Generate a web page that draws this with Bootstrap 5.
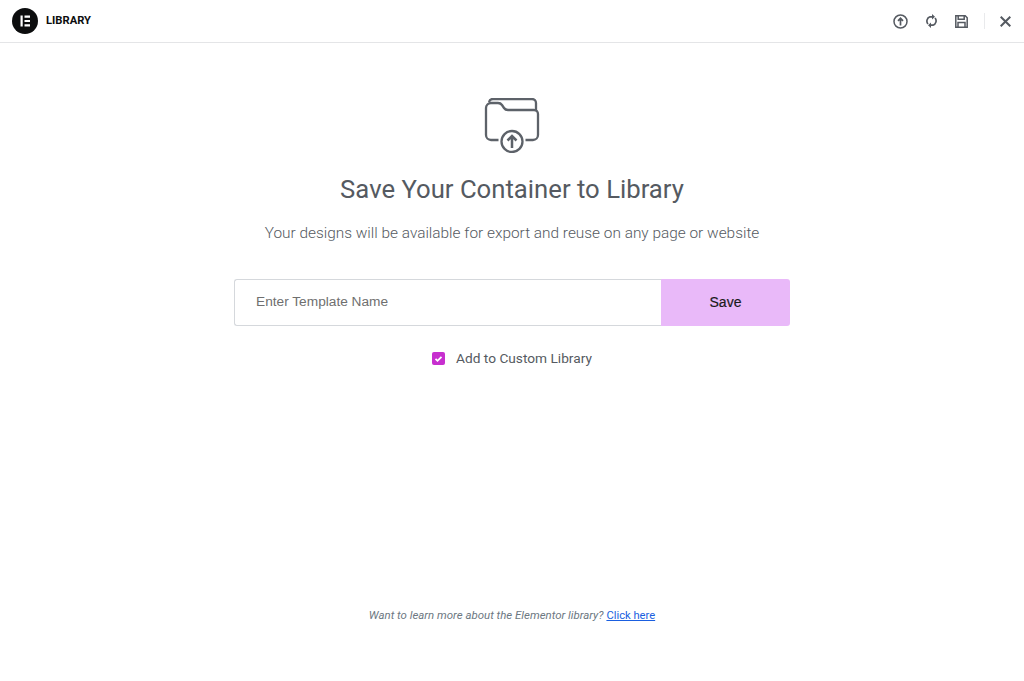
<!DOCTYPE html>
<html lang="en"><head><meta charset="utf-8"><title>Library</title>
<link href="https://cdn.jsdelivr.net/npm/bootstrap@5.3.0/dist/css/bootstrap.min.css" rel="stylesheet">
<style>
html,body{height:681px;overflow:hidden;background:#fff}
body{font-family:Roboto,sans-serif;color:#555a61}
.lib-head{height:43px;border-bottom:1px solid #e4e5e7;padding:0 13px 0 12px}
.lib-logo{width:26px;height:26px;flex:none}
.lib-title{font-size:11.2px;font-weight:700;color:#0c0d0e;margin-left:8px;position:relative;top:.5px}
.lib-tool-a{margin-right:18px}
.lib-sep{width:1px;height:16px;background:#e9eaec;margin:0 15px 0 16px}
.lib-main{padding-top:55px}
.lib-h{font-size:25.7px;font-weight:400;color:#555a61;margin:21px 0 0;line-height:30px}
.lib-sub{font-size:15.4px;font-weight:300;color:#555a61;margin:17px 0 0;line-height:24px}
.lib-form{width:556px;height:47px;margin-top:34px}
.lib-input{flex:1;border:1px solid #d5d8dc;border-right:0;border-radius:3px 0 0 3px;padding:0 21px;font-size:13.7px;font-family:"Liberation Sans",sans-serif;color:#555}
.lib-input::placeholder{color:#6f6f6f;opacity:1}
.lib-save{width:129px;background:#e9b9f9;border:0;border-radius:0 3px 3px 0;font-size:14px;font-weight:400;color:#1b1b1b;font-family:"Liberation Sans",sans-serif;-webkit-text-stroke:.2px #1b1b1b}
.lib-check{margin-top:23px;font-size:13.7px;color:#555a61;line-height:18px;gap:11px}
.lib-box{width:13px;height:13px;background:#c72fcf;border-radius:2px}
.lib-foot{position:absolute;top:607px;left:0;right:0;font-size:11.45px;font-style:italic;color:#6d7882;line-height:16px}
.lib-foot a{font-style:normal;font-size:11.2px;color:#1a5fe0}
</style></head><body>
<header class="lib-head d-flex align-items-center justify-content-between">
<div class="d-flex align-items-center">
<svg class="lib-logo" viewBox="0 0 26 26"><circle cx="13" cy="13" r="13" fill="#0c0d0e"/><path fill="#fff" d="M8.500 7.500h2.200v11H8.500zM12.500 7.500h5.500v2.200h-5.500zM12.500 11.900h5.500v2.200h-5.500zM12.500 16.300h5.500v2.200h-5.500z"/></svg>
<span class="lib-title">LIBRARY</span></div>
<div class="d-flex align-items-center">
<svg width="15" height="15" viewBox="0 0 15 15" fill="none" stroke="#555a61" stroke-width="1.500" class="lib-tool-a"><circle cx="7.500" cy="7.500" r="6.500"/><path d="M7.500 11.500V4.500M5 6.800 7.500 4.300 10 6.800" stroke-width="1.700"/></svg>
<svg width="11" height="14" viewBox="0 0 11 14" fill="none" stroke="#555a61" stroke-width="1.700" class="lib-tool-a"><path d="M2 10A4.500 4.500 0 0 1 4 2.800H6.500M9 4A4.500 4.500 0 0 1 7 11.200H4.500"/><path fill="#555a61" stroke="none" d="M6 0v5.500l3-2.700zM5 8.500V14L2 11.200z"/></svg>
<svg width="13" height="13" viewBox="0 0 13 13" fill="none" stroke="#555a61" stroke-width="1.500"><path d="M.8.800h9.400l2 2v9.400H.8z"/><path d="M3.200.800v3.400h6V.800M3 12.200V7.500h7v4.700"/></svg>
<span class="lib-sep"></span>
<svg width="11" height="11" viewBox="0 0 11 11" fill="none" stroke="#555a61" stroke-width="2"><path d="m.7.700 9.600 9.600M10.300.700.7 10.300"/></svg>
</div></header>
<main class="lib-main d-flex flex-column align-items-center">
<svg width="56" height="55" viewBox="0 0 56 55" fill="none" stroke="#5d6269" stroke-width="2.300"><path d="M14.500 42H7a5 5 0 0 1-5-5V10a5 5 0 0 1 5-5h7c2 0 3 .6 4 2l2 3c1 1.500 2 2 4 2h26a4 4 0 0 1 4 4v21a5 5 0 0 1-5 5h-7.500"/><path d="M5 4a4 4 0 0 1 4-3h39a4 4 0 0 1 4 4v8"/><circle cx="28" cy="43.500" r="10.500"/><path d="M28 50V38M23.500 42.500 28 38l4.500 4.500" stroke-width="2.500"/></svg>
<h1 class="lib-h">Save Your Container to Library</h1>
<p class="lib-sub">Your designs will be available for export and reuse on any page or website</p>
<form class="lib-form d-flex"><input class="lib-input" placeholder="Enter Template Name"><button type="button" class="lib-save">Save</button></form>
<div class="lib-check d-flex align-items-center"><svg class="lib-box" viewBox="0 0 13 13"><path d="m3.500 6.800 2 2 4-4" fill="none" stroke="#fff" stroke-width="1.800"/></svg><span>Add to Custom Library</span></div>
</main>
<div class="lib-foot text-center">Want to learn more about the Elementor library? <a href="#">Click here</a></div>
</body></html>
